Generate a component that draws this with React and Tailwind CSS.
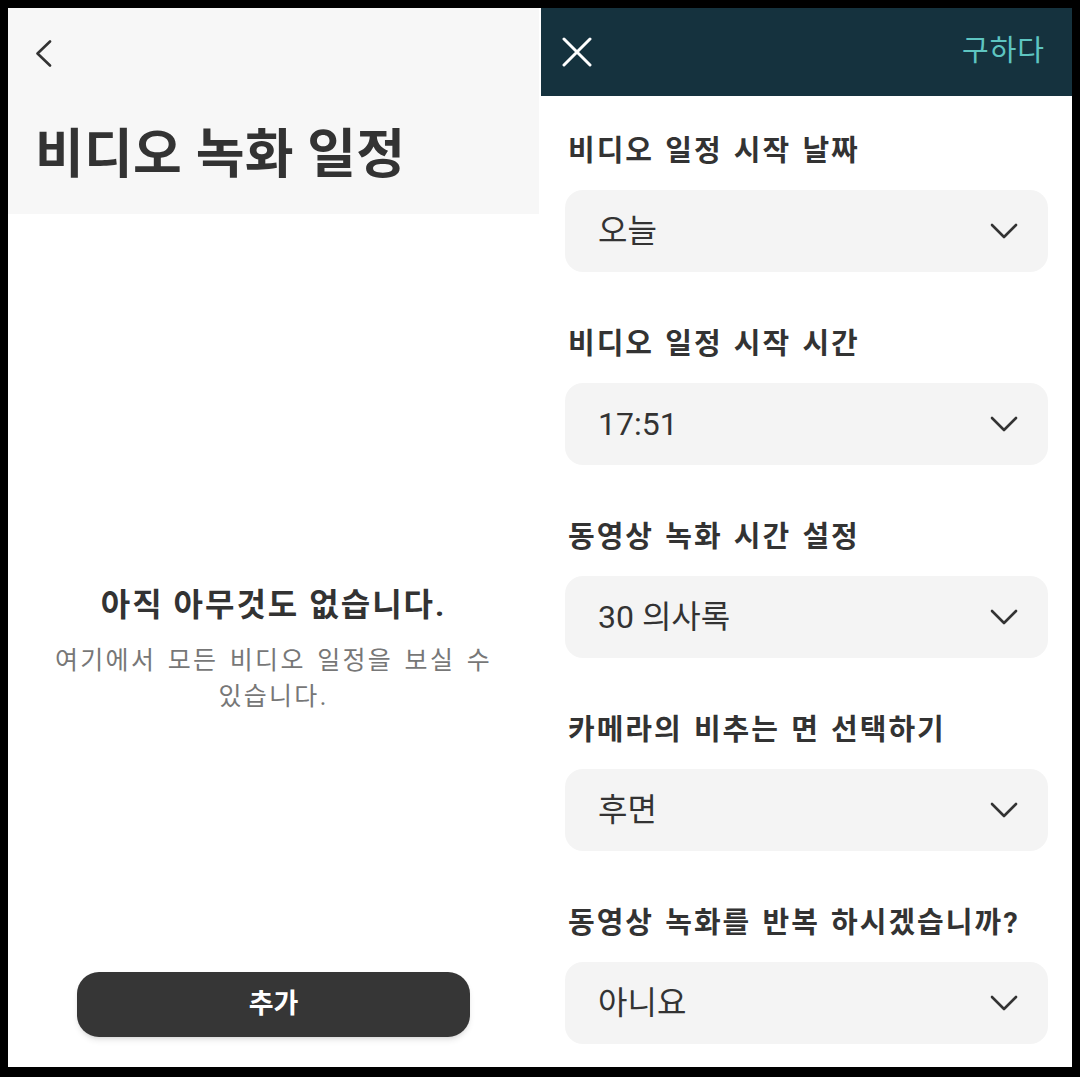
import React from "react";

const font = { fontFamily: 'Roboto, "Noto Sans CJK KR", sans-serif' };

function Chevron() {
  return (
    <svg width="30" height="18" viewBox="0 0 30 18" fill="none">
      <path d="M3 3 L15 15 L27 3" stroke="#333" strokeWidth="2.6" strokeLinecap="round" strokeLinejoin="round" />
    </svg>
  );
}

function Field({ label, value }) {
  return (
    <div className="flex flex-col">
      <div className="text-[29px] leading-[40px] font-bold text-[#333] tracking-[2px] [word-spacing:2px] pl-[3px]">{label}</div>
      <div className="mt-[19px] h-[82px] rounded-[18px] bg-[#f4f4f4] flex items-center justify-between pl-[33px] pr-[29px]">
        <span className="text-[32px] text-[#333]">{value}</span>
        <Chevron />
      </div>
    </div>
  );
}

export default function App() {
  const fields = [
    ["비디오 일정 시작 날짜", "오늘"],
    ["비디오 일정 시작 시간", "17:51"],
    ["동영상 녹화 시간 설정", "30 의사록"],
    ["카메라의 비추는 면 선택하기", "후면"],
    ["동영상 녹화를 반복 하시겠습니까?", "아니요"],
  ];

  return (
    <div className="w-[1080px] h-[1077px] bg-black pt-2 pl-2 pr-2 pb-[10px]" style={font}>
      <div className="flex w-full h-full bg-white overflow-hidden">
        {/* left screen */}
        <div className="w-[531px] flex flex-col">
          <div className="h-[206px] bg-[#f7f7f7] pl-[27px] pt-[32px]">
            <svg width="18" height="27" viewBox="0 0 18 27" fill="none">
              <path d="M15 1.5 L2.5 13.5 L15 25.5" stroke="#333" strokeWidth="2.6" strokeLinecap="round" strokeLinejoin="round" />
            </svg>
            <div className="mt-[57px] text-[53px] leading-[62px] font-bold text-[#333] tracking-[0.3px]">비디오 녹화 일정</div>
          </div>
          <div className="flex-1 flex flex-col items-center">
            <div className="mt-[371px] text-[32px] leading-[40px] font-bold text-[#333] tracking-[2px]">아직 아무것도 없습니다.</div>
            <div className="mt-[18px] text-[25px] leading-[36px] text-[#777] text-center tracking-[2.3px] [word-spacing:3px]">
              여기에서 모든 비디오 일정을 보실 수<br />있습니다.
            </div>
            <div className="mt-auto mb-[30px] w-[393px] h-[65px] rounded-[22px] bg-[#363636] shadow-md flex items-center justify-center text-white text-[27px] font-bold">
              추가
            </div>
          </div>
        </div>
        <div className="w-[2px] bg-white" />
        {/* right screen */}
        <div className="flex-1 flex flex-col">
          <div className="h-[88px] bg-[#15323e] flex items-center justify-between pl-[21px] pr-[27px]">
            <svg width="30" height="30" viewBox="0 0 30 30" fill="none">
              <path d="M2 2 L28 28 M28 2 L2 28" stroke="#fff" strokeWidth="3" strokeLinecap="round" />
            </svg>
            <span className="text-[29px] text-[#5ec5c1] tracking-[1px]">구하다</span>
          </div>
          <div className="flex flex-col gap-[52px] pt-[35px] px-[24px]">
            {fields.map(([l, v]) => (
              <Field key={l} label={l} value={v} />
            ))}
          </div>
        </div>
      </div>
    </div>
  );
}
